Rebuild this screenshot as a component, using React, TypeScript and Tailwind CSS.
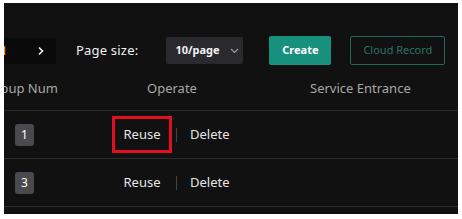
import React from "react";

export default function App() {
  const font = { fontFamily: '"Noto Sans", "Open Sans", sans-serif' };
  return (
    <div className="w-[462px] h-[219px] bg-white pt-[3px] pl-[4px]" style={font}>
      <div className="w-[454px] h-[211px] bg-[#111111] overflow-hidden flex flex-col">
        {/* toolbar */}
        <div className="flex items-center h-[29px] mt-[33px]">
          <div className="w-[52px] h-[26px] bg-[#0a0a0a] flex items-center overflow-hidden">
            <span className="-ml-[4px] text-[12px] font-bold text-[#f0a020]">1</span>
            <svg className="ml-[30px]" width="8" height="10" viewBox="0 0 8 10">
              <path d="M2 1.5 L5.5 5 L2 8.5" stroke="#f0f0f0" strokeWidth="1.6" fill="none" />
            </svg>
          </div>
          <span className="ml-[20px] text-[13px] tracking-[0.2px] text-[#eef2f2]">Page size:</span>
          <div className="ml-[28px] w-[77px] h-[27px] bg-[#2a2a2e] rounded-[2px] flex items-center pl-[9px]">
            <span className="text-[11px] font-bold text-[#f2f2f2]">10/page</span>
            <svg className="ml-[10px]" width="9" height="6" viewBox="0 0 9 6">
              <path d="M1 1 L4.5 4.5 L8 1" stroke="#9a9a9a" strokeWidth="1.2" fill="none" />
            </svg>
          </div>
          <div className="ml-[26px] w-[62px] h-[29px] bg-[#17907e] rounded-[2px] flex items-center justify-center text-[11px] font-bold text-white">
            Create
          </div>
          <div className="ml-[19px] w-[95px] h-[29px] border border-[#1e6a5c] rounded-[2px] flex items-center justify-center text-[11px] text-[#2a7262]">
            Cloud Record
          </div>
        </div>
        {/* header */}
        <div className="flex items-center h-[46px] pt-[2px] border-b border-[#2a2a2a] text-[13px] text-[#a8a8a8]">
          <div className="w-[96px] overflow-hidden whitespace-nowrap">
            <span className="-ml-[18px] inline-block">Group Num</span>
          </div>
          <div className="w-[210px] pl-[47px]">Operate</div>
          <div>Service Entrance</div>
        </div>
        {/* rows */}
        {["1", "3"].map((n, i) => (
          <div key={n} className="flex items-center h-[48px] border-b border-[#2c2c2c] text-[13px] text-[#e6e6e6]">
            <div className="w-[96px] pl-[11px]">
              <div className="w-[19px] h-[22px] bg-[#4a4a4e] rounded-[3px] flex items-center justify-center text-[12px] text-white">
                {n}
              </div>
            </div>
            <div className="flex items-center">
              <div
                className={
                  i === 0
                    ? "w-[60px] h-[37px] border-[3px] border-[#e0101e] flex items-center justify-center ml-[12px]"
                    : "w-[60px] h-[37px] flex items-center justify-center ml-[12px]"
                }
              >
                Reuse
              </div>
              <div className="ml-[4px] w-px h-[14px] bg-[#444444]" />
              <span className="ml-[13px]">Delete</span>
            </div>
          </div>
        ))}
      </div>
    </div>
  );
}
